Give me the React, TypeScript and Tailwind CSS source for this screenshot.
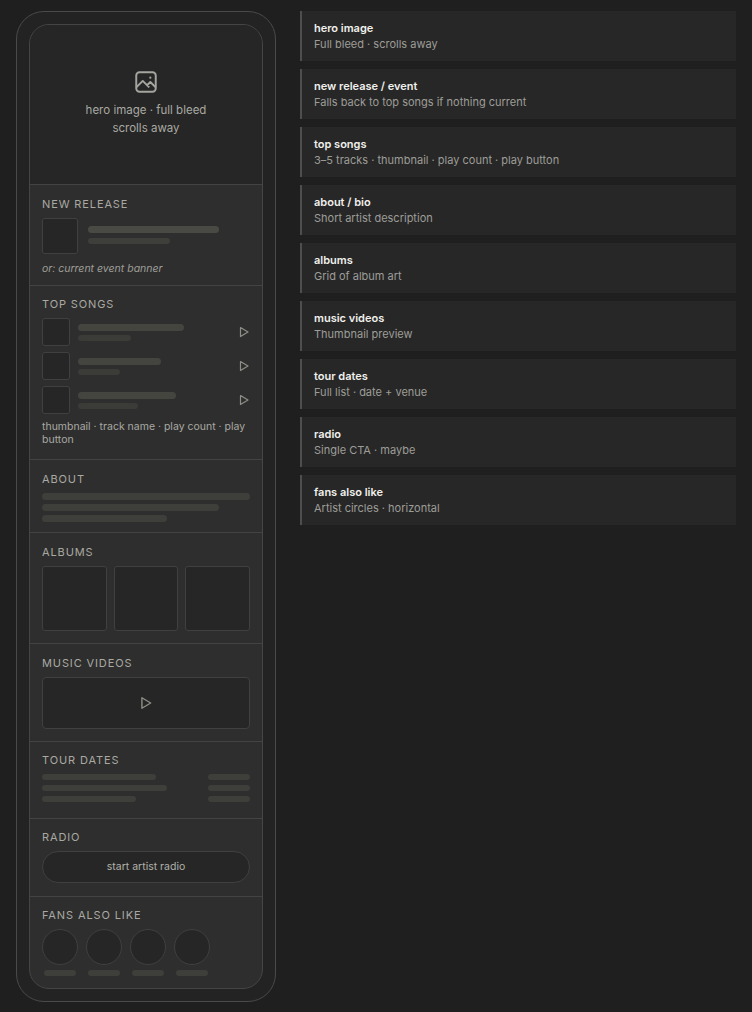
import React from "react";

const Bar = ({ w, c = "bg-[#454540]", h = "h-[7px]" }: { w: string; c?: string; h?: string }) => (
  <div className={`${h} ${c} rounded-full`} style={{ width: w }} />
);

const Title = ({ children }: { children: React.ReactNode }) => (
  <div className="text-[11px] tracking-[0.08em] text-[#a9a9a2] uppercase leading-[14px] mb-[7px]">{children}</div>
);

const Play = ({ s = 12 }: { s?: number }) => (
  <svg width={s} height={s} viewBox="0 0 12 12" fill="none" stroke="#8e8e88" strokeWidth="1.2" strokeLinejoin="round">
    <path d="M2.5 1.5 L10 6 L2.5 10.5 Z" />
  </svg>
);

const Thumb = ({ s }: { s: string }) => <div className={`${s} bg-[#262626] border border-[#404040] rounded-[3px] shrink-0`} />;

const notes = [
  ["hero image", "Full bleed · scrolls away"],
  ["new release / event", "Falls back to top songs if nothing current"],
  ["top songs", "3–5 tracks · thumbnail · play count · play button"],
  ["about / bio", "Short artist description"],
  ["albums", "Grid of album art"],
  ["music videos", "Thumbnail preview"],
  ["tour dates", "Full list · date + venue"],
  ["radio", "Single CTA · maybe"],
  ["fans also like", "Artist circles · horizontal"],
];

export default function App() {
  const sec = "border-t border-[#434343] px-[12px]";
  return (
    <div className="min-h-[1012px] bg-[#1f1f1f] flex gap-[24px] pl-[16px] pr-[16px] pt-[11px]" style={{ fontFamily: "Inter, 'Noto Sans', sans-serif" }}>
      <div className="w-[260px] h-[991px] shrink-0 rounded-[28px] border border-[#4a4a4a] bg-[#232323] p-[12px]">
        <div className="h-[965px] rounded-[20px] border border-[#454545] bg-[#2e2e2e] overflow-hidden flex flex-col">
          <div className="h-[159px] bg-[#262626] flex flex-col items-center justify-center text-[11.5px] text-[#a9a9a2] leading-[18px] pb-[4px]">
            <svg width="26" height="26" viewBox="0 0 24 24" fill="none" stroke="#a5a5a0" strokeWidth="1.8" strokeLinejoin="round" className="mb-[6px]">
              <rect x="3" y="3" width="18" height="18" rx="3" />
              <path d="M3 17 L9 11 L15 17 M13 15 L16 12 L21 17" />
              <circle cx="16" cy="8" r="1" fill="#a5a5a0" stroke="none" />
            </svg>
            <div>hero image · full bleed</div>
            <div>scrolls away</div>
          </div>
          <div className={`${sec} h-[101px] pt-[12px]`}>
            <Title>New release</Title>
            <div className="flex gap-[10px] items-start">
              <Thumb s="w-[36px] h-[36px]" />
              <div className="flex flex-col gap-[5px] pt-[8px]">
                <Bar w="131px" c="bg-[#4a4a45]" />
                <Bar w="82px" c="bg-[#3e3e3b]" h="h-[6px]" />
              </div>
            </div>
            <div className="italic text-[10.5px] text-[#9e9e98] mt-[7px]">or: current event banner</div>
          </div>
          <div className={`${sec} h-[174px] pt-[11px]`}>
            <Title>Top songs</Title>
            <div className="flex flex-col gap-[6px]">
              {[["106px", "53px"], ["83px", "42px"], ["98px", "60px"]].map(([a, b], i) => (
                <div key={i} className="flex items-center gap-[8px]">
                  <Thumb s="w-[28px] h-[28px]" />
                  <div className="flex flex-col gap-[4px] flex-1">
                    <Bar w={a} c="bg-[#454540]" />
                    <Bar w={b} c="bg-[#3b3b38]" h="h-[6px]" />
                  </div>
                  <Play />
                </div>
              ))}
            </div>
            <div className="text-[10.5px] text-[#a9a9a2] leading-[13px] mt-[6px]">thumbnail · track name · play count · play button</div>
          </div>
          <div className={`${sec} h-[73px] pt-[12px]`}>
            <Title>About</Title>
            <div className="flex flex-col gap-[4px]">
              <Bar w="208px" c="bg-[#3e3e3b]" />
              <Bar w="177px" c="bg-[#3e3e3b]" />
              <Bar w="125px" c="bg-[#3e3e3b]" />
            </div>
          </div>
          <div className={`${sec} h-[111px] pt-[12px]`}>
            <Title>Albums</Title>
            <div className="grid grid-cols-3 gap-[7px]">
              {[0, 1, 2].map(i => <div key={i} className="h-[65px] bg-[#262626] border border-[#404040] rounded-[3px]" />)}
            </div>
          </div>
          <div className={`${sec} h-[98px] pt-[12px]`}>
            <Title>Music videos</Title>
            <div className="h-[52px] bg-[#262626] border border-[#404040] rounded-[4px] flex items-center justify-center">
              <Play s={14} />
            </div>
          </div>
          <div className={`${sec} h-[77px] pt-[11px]`}>
            <Title>Tour dates</Title>
            <div className="flex justify-between">
              <div className="flex flex-col gap-[5px]">
                <Bar w="114px" c="bg-[#3e3e3b]" h="h-[6px]" />
                <Bar w="125px" c="bg-[#3e3e3b]" h="h-[6px]" />
                <Bar w="94px" c="bg-[#3e3e3b]" h="h-[6px]" />
              </div>
              <div className="flex flex-col gap-[5px]">
                <Bar w="42px" c="bg-[#3e3e3b]" h="h-[6px]" />
                <Bar w="42px" c="bg-[#3e3e3b]" h="h-[6px]" />
                <Bar w="42px" c="bg-[#3e3e3b]" h="h-[6px]" />
              </div>
            </div>
          </div>
          <div className={`${sec} h-[78px] pt-[11px]`}>
            <Title>Radio</Title>
            <div className="h-[32px] rounded-full bg-[#262626] border border-[#404040] flex items-center justify-center text-[10.5px] text-[#b0b0aa]">start artist radio</div>
          </div>
          <div className={`${sec} flex-1 pt-[11px]`}>
            <Title>Fans also like</Title>
            <div className="flex gap-[8px]">
              {[0, 1, 2, 3].map(i => (
                <div key={i} className="flex flex-col items-center gap-[5px]">
                  <div className="w-[36px] h-[36px] rounded-full bg-[#262626] border border-[#404040]" />
                  <Bar w="32px" c="bg-[#3e3e3b]" h="h-[6px]" />
                </div>
              ))}
            </div>
          </div>
        </div>
      </div>
      <div className="flex-1 flex flex-col gap-[8px]">
        {notes.map(([t, s]) => (
          <div key={t} className="h-[50px] bg-[#272727] border-l-2 border-[#4e4e4e] px-[12px] flex flex-col justify-center">
            <div className="text-[11px] font-semibold text-[#f0f0ec] leading-[16px]">{t}</div>
            <div className="text-[11px] text-[#9d9d98] leading-[16px]">{s}</div>
          </div>
        ))}
      </div>
    </div>
  );
}
